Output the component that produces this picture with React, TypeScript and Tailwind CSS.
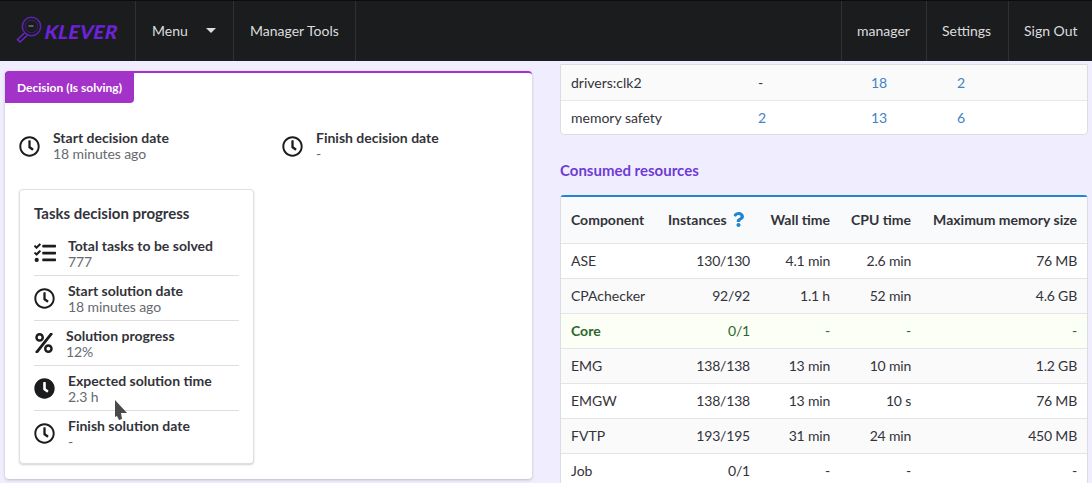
import { FaClock, FaPercent, FaQuestion, FaRegClock, FaTasks } from "react-icons/fa";
import type { ReactNode } from "react";

function Logo() {
  return (
    <div className="flex w-[135px] items-center pl-[16px]">
      <svg width="26" height="30" viewBox="0 0 26 30" fill="none" className="shrink-0">
        <circle cx="15.5" cy="10.5" r="9.2" stroke="#5a23b0" strokeWidth="1.6" />
        <circle cx="15.5" cy="10.5" r="6.3" stroke="#3f1a80" strokeWidth="1" />
        <path d="M12.5 10h5" stroke="#8a8a94" strokeWidth="1.2" />
        <path d="M8.5 17 1.5 23.5l2.5 2.5 7-6.5" stroke="#6a28cc" strokeWidth="1.5" />
      </svg>
      <span className="ml-[3px] -skew-x-12 text-[19px] leading-none font-black tracking-[0.4px] text-[#6d22dc]">
        KLEVER
      </span>
    </div>
  );
}

function NavItem({ children, className = "" }: { children: ReactNode; className?: string }) {
  return (
    <div className={`flex items-center border-l border-[#2f3032] pb-[2px] text-[14px] text-[#dcdcdd] ${className}`}>
      {children}
    </div>
  );
}

function Navbar() {
  return (
    <nav className="flex h-[61px] shrink-0 border-t border-[#0c0c0d] bg-[#1b1c1d]">
      <Logo />
      <NavItem className="w-[98px] pl-[16px]">
        Menu
        <span className="ml-[18px] h-0 w-0 border-x-[5px] border-t-[5px] border-x-transparent border-t-[#dcdcdd]" />
      </NavItem>
      <NavItem className="w-[123px] border-r pl-[16px]">Manager Tools</NavItem>
      <div className="flex-1" />
      <NavItem className="w-[85px] pl-[15px]">manager</NavItem>
      <NavItem className="w-[82px] pl-[15px]">Settings</NavItem>
      <NavItem className="w-[84px] pl-[15px]">Sign Out</NavItem>
    </nav>
  );
}

function DateField({ title, value }: { title: string; value: string }) {
  return (
    <div className="flex items-center">
      <FaRegClock className="mr-[13px] size-[21px] text-[#1b1c1d]" />
      <div>
        <div className="text-[14px] leading-[16px] font-bold text-[#33333a]">{title}</div>
        <div className="text-[14px] leading-[16px] tracking-[-0.1px] text-[#666a70]">{value}</div>
      </div>
    </div>
  );
}

function ProgressRow({
  icon,
  title,
  value,
  gap = "w-[34px]",
  last = false,
  children,
}: {
  icon: ReactNode;
  title: string;
  value: string;
  gap?: string;
  last?: boolean;
  children?: ReactNode;
}) {
  return (
    <div className={`relative flex h-[45px] items-center ${last ? "" : "border-b border-[#dededf]"}`}>
      <div className={`flex shrink-0 items-center ${gap}`}>{icon}</div>
      <div>
        <div className="text-[14px] leading-[16px] font-bold text-[#33333a]">{title}</div>
        <div className="text-[14px] leading-[15px] tracking-[-0.1px] text-[#666a70]">{value}</div>
      </div>
      {children}
    </div>
  );
}

function DecisionCard() {
  return (
    <section className="mt-[10px] h-[408px] w-[527px] rounded-[4px] border-t-[2px] border-[#a333c8] bg-white shadow-[0_1px_3px_0_rgba(34,36,38,0.25)]">
      <div className="flex h-[30px] w-[129px] items-center justify-center rounded-br-[4px] bg-[#a333c8] text-[12px] font-bold text-white">
        Decision (Is solving)
      </div>
      <div className="mt-[27px] flex pl-[14px]">
        <div className="w-[263px]">
          <DateField title="Start decision date" value="18 minutes ago" />
        </div>
        <DateField title="Finish decision date" value="-" />
      </div>
      <div className="mt-[27px] ml-[14px] h-[275px] w-[235px] rounded-[4px] border border-[#e0e0e2] bg-white px-[14px] pt-[13px] shadow-[0_1px_2px_0_rgba(34,36,38,0.2)]">
        <h3 className="text-[15px] leading-[20px] font-bold text-[#33333a]">Tasks decision progress</h3>
        <div className="mt-[8px]">
          <ProgressRow
            icon={<FaTasks className="size-[22px] text-[#1b1c1d]" />}
            title="Total tasks to be solved"
            value="777"
          />
          <ProgressRow
            icon={<FaRegClock className="size-[21px] text-[#1b1c1d]" />}
            title="Start solution date"
            value="18 minutes ago"
          />
          <ProgressRow
            icon={<FaPercent className="size-[20px] text-[#1b1c1d]" />}
            title="Solution progress"
            value="12%"
            gap="w-[32px]"
          />
          <ProgressRow
            icon={<FaClock className="size-[21px] text-[#1b1c1d]" />}
            title="Expected solution time"
            value="2.3 h"
          >
            <svg width="13" height="21" viewBox="0 0 13 21" className="absolute top-[34px] left-[81px]">
              <path d="M0 0v17l2-1 2 4 3-1-1-6h6z" fill="#4a4a4a" />
            </svg>
          </ProgressRow>
          <ProgressRow
            icon={<FaRegClock className="size-[21px] text-[#1b1c1d]" />}
            title="Finish solution date"
            value="-"
            last
          />
        </div>
      </div>
    </section>
  );
}

function MarkTable() {
  const rows = [
    { name: "drivers:clk2", a: "-", b: "18", c: "2", striped: true },
    { name: "memory safety", a: "2", b: "13", c: "6", striped: false },
  ];
  const link = (v: string) => (v === "-" ? "text-[#33333a]" : "text-[#4183c4]");
  return (
    <div className="mt-[3px] overflow-hidden rounded-b-[4px] border border-[#dcdde0] bg-white">
      {rows.map((r, i) => (
        <div
          key={r.name}
          className={`flex items-center pl-[10px] text-[14px] text-[#33333a] ${r.striped ? "h-[35px] bg-[#fafafb]" : "h-[34px]"} ${i ? "border-t border-[#e8e8e9]" : ""}`}
        >
          <span className="w-[187px]">{r.name}</span>
          <span className={`w-[113px] ${link(r.a)}`}>{r.a}</span>
          <span className={`w-[86px] ${link(r.b)}`}>{r.b}</span>
          <span className={link(r.c)}>{r.c}</span>
        </div>
      ))}
    </div>
  );
}

const RESOURCES = [
  ["ASE", "130/130", "4.1 min", "2.6 min", "76 MB"],
  ["CPAchecker", "92/92", "1.1 h", "52 min", "4.6 GB"],
  ["Core", "0/1", "-", "-", "-"],
  ["EMG", "138/138", "13 min", "10 min", "1.2 GB"],
  ["EMGW", "138/138", "13 min", "10 s", "76 MB"],
  ["FVTP", "193/195", "31 min", "24 min", "450 MB"],
  ["Job", "0/1", "-", "-", "-"],
];

function ResourcesTable() {
  return (
    <div className="mt-[15px] rounded-t-[4px] border-x border-t-[2px] border-x-[#dcdde0] border-t-[#2185d0] bg-white">
      <table className="w-full table-fixed border-collapse text-[14px] text-[#33333a]">
        <colgroup>
          <col className="w-[96px]" />
          <col className="w-[104px]" />
          <col className="w-[80px]" />
          <col className="w-[81px]" />
          <col />
        </colgroup>
        <thead>
          <tr className="h-[46px] bg-[#f9fafb] text-right font-bold">
            <th className="pl-[10px] text-left font-bold">Component</th>
            <th className="pr-[11px] text-left font-bold">
              <span className="ml-[11px] inline-flex items-center">
                Instances
                <FaQuestion className="ml-[4px] size-[15px] text-[#2185d0]" />
              </span>
            </th>
            <th className="pr-[11px] font-bold">Wall time</th>
            <th className="pr-[11px] font-bold">CPU time</th>
            <th className="pr-[10px] font-bold">Maximum memory size</th>
          </tr>
        </thead>
        <tbody>
          {RESOURCES.map((r, i) => {
            const core = r[0] === "Core";
            const bg = core ? "bg-[#fcfff5] text-[#2c662d]" : i % 2 ? "bg-[#fafafb]" : "";
            return (
              <tr key={r[0]} className={`h-[35px] border-t border-[#e5e5e7] ${bg}`}>
                <td className={`pl-[10px] ${core ? "font-bold" : ""}`}>{r[0]}</td>
                <td className="pr-[11px] text-right tracking-[-0.2px]">{r[1]}</td>
                <td className="pr-[11px] text-right tracking-[-0.2px]">{r[2]}</td>
                <td className="pr-[11px] text-right tracking-[-0.2px]">{r[3]}</td>
                <td className="pr-[10px] text-right tracking-[-0.2px]">{r[4]}</td>
              </tr>
            );
          })}
        </tbody>
      </table>
    </div>
  );
}

export default function App() {
  return (
    <div className="flex h-[483px] w-[1092px] flex-col overflow-hidden bg-[#f0eefe] font-['Lato',sans-serif]">
      <Navbar />
      <main className="flex pl-[5px]">
        <DecisionCard />
        <div className="ml-[28px] w-[528px]">
          <MarkTable />
          <h2 className="mt-[25px] text-[15px] leading-[20px] font-bold text-[#6f3bd5]">Consumed resources</h2>
          <ResourcesTable />
        </div>
      </main>
    </div>
  );
}
